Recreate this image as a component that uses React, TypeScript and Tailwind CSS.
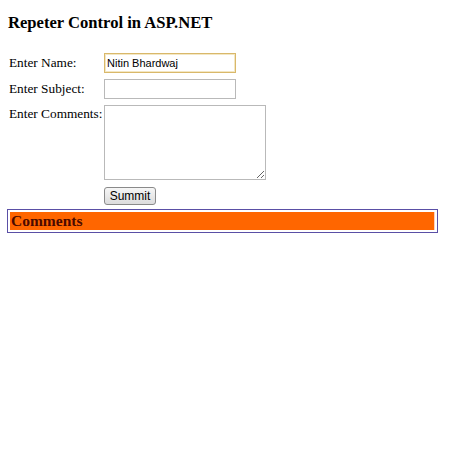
import React, { useState } from 'react';

export default function App() {
  const [name, setName] = useState('Nitin Bhardwaj');
  const [subject, setSubject] = useState('');
  const [comments, setComments] = useState('');

  return (
    <div className="min-h-screen bg-white text-black font-['Liberation_Serif','Times_New_Roman',serif]">
      <div className="pl-[8px] pt-[13px]">
        <h2 className="text-[16.6px] font-bold leading-[19px] whitespace-nowrap">Repeter Control in ASP.NET</h2>

        {/* Form */}
        <div className="mt-[21px] flex flex-col text-[13.3px]">
          <div className="flex items-center h-[20px]">
            <label className="w-[96px] pl-[1px] whitespace-nowrap">Enter Name:</label>
            <input
              value={name}
              onChange={(e) => setName(e.target.value)}
              className="w-[132px] h-[20px] px-[2px] border border-[#d9b86a] shadow-[inset_0_0_0_1px_#f3e7c4] outline-none text-[11px] font-['Liberation_Sans',Arial,sans-serif]"
            />
          </div>
          <div className="flex items-center h-[20px] mt-[6px]">
            <label className="w-[96px] pl-[1px] whitespace-nowrap">Enter Subject:</label>
            <input
              value={subject}
              onChange={(e) => setSubject(e.target.value)}
              className="w-[132px] h-[20px] px-[2px] border border-[#b9b9b9] outline-none text-[11px] font-['Liberation_Sans',Arial,sans-serif]"
            />
          </div>
          <div className="flex items-start mt-[6px]">
            <label className="w-[96px] pl-[1px] leading-[16px] mt-[1px] whitespace-nowrap">Enter Comments:</label>
            <textarea
              value={comments}
              onChange={(e) => setComments(e.target.value)}
              className="w-[162px] h-[75px] border border-[#b9b9b9] outline-none text-[11px] font-['Liberation_Sans',Arial,sans-serif]"
            />
          </div>
          <div className="flex mt-[7px]">
            <div className="w-[96px]" />
            <button className="w-[52px] h-[18px] rounded-[3px] border border-[#8a8a8a] bg-gradient-to-b from-[#f6f6f6] to-[#dcdcdc] text-[12px] leading-[16px] font-['Liberation_Sans',Arial,sans-serif]">
              Summit
            </button>
          </div>
        </div>
      </div>

      {/* Comments header */}
      <div className="ml-[7px] mt-[4px] w-[431px] border border-[#5a4fa6] p-[2px]">
        <div className="bg-[#ff6600] h-[18px] flex items-center pl-[1px] border-r border-[#ffd0c0]">
          <span className="text-[15.5px] font-bold text-[#4a0a00] leading-[18px]">Comments</span>
        </div>
      </div>
    </div>
  );
}
